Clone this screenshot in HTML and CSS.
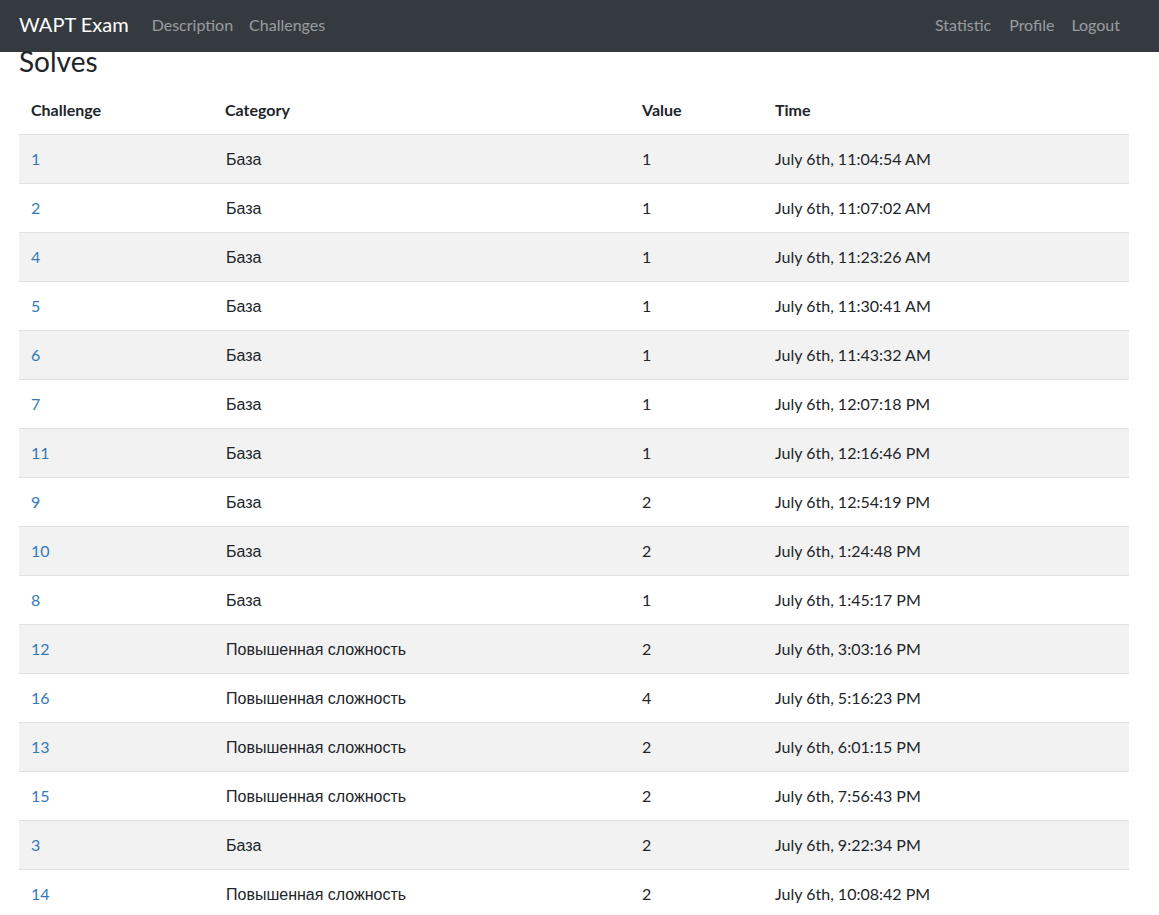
FILE: index.html
```html
<!DOCTYPE html>
<html lang="en">
<head>
<meta charset="utf-8">
<title>WAPT Exam - Solves</title>
<link rel="stylesheet" href="styles.css">
</head>
<body>
<nav class="navbar">
  <div class="nav-left">
    <a class="brand" href="#">WAPT Exam</a>
    <a class="nav-link" href="#">Description</a>
    <a class="nav-link" href="#">Challenges</a>
  </div>
  <div class="nav-right">
    <a class="nav-link stat" href="#">Statistic</a>
    <a class="nav-link prof" href="#">Profile</a>
    <a class="nav-link" href="#">Logout</a>
  </div>
</nav>
<main class="container">
  <h1 class="title">Solves</h1>
  <table class="solves">
    <colgroup>
      <col class="c-chal">
      <col class="c-cat">
      <col class="c-val">
      <col class="c-time">
    </colgroup>
    <thead>
      <tr><th>Challenge</th><th>Category</th><th>Value</th><th>Time</th></tr>
    </thead>
    <tbody>
      <tr><td><a href="#">1</a></td><td class="cat"><span>База</span></td><td>1</td><td>July 6th, 11:04:54 AM</td></tr>
      <tr><td><a href="#">2</a></td><td class="cat"><span>База</span></td><td>1</td><td>July 6th, 11:07:02 AM</td></tr>
      <tr><td><a href="#">4</a></td><td class="cat"><span>База</span></td><td>1</td><td>July 6th, 11:23:26 AM</td></tr>
      <tr><td><a href="#">5</a></td><td class="cat"><span>База</span></td><td>1</td><td>July 6th, 11:30:41 AM</td></tr>
      <tr><td><a href="#">6</a></td><td class="cat"><span>База</span></td><td>1</td><td>July 6th, 11:43:32 AM</td></tr>
      <tr><td><a href="#">7</a></td><td class="cat"><span>База</span></td><td>1</td><td>July 6th, 12:07:18 PM</td></tr>
      <tr><td><a href="#">11</a></td><td class="cat"><span>База</span></td><td>1</td><td>July 6th, 12:16:46 PM</td></tr>
      <tr><td><a href="#">9</a></td><td class="cat"><span>База</span></td><td>2</td><td>July 6th, 12:54:19 PM</td></tr>
      <tr><td><a href="#">10</a></td><td class="cat"><span>База</span></td><td>2</td><td>July 6th, 1:24:48 PM</td></tr>
      <tr><td><a href="#">8</a></td><td class="cat"><span>База</span></td><td>1</td><td>July 6th, 1:45:17 PM</td></tr>
      <tr><td><a href="#">12</a></td><td class="cat"><span>Повышенная сложность</span></td><td>2</td><td>July 6th, 3:03:16 PM</td></tr>
      <tr><td><a href="#">16</a></td><td class="cat"><span>Повышенная сложность</span></td><td>4</td><td>July 6th, 5:16:23 PM</td></tr>
      <tr><td><a href="#">13</a></td><td class="cat"><span>Повышенная сложность</span></td><td>2</td><td>July 6th, 6:01:15 PM</td></tr>
      <tr><td><a href="#">15</a></td><td class="cat"><span>Повышенная сложность</span></td><td>2</td><td>July 6th, 7:56:43 PM</td></tr>
      <tr><td><a href="#">3</a></td><td class="cat"><span>База</span></td><td>2</td><td>July 6th, 9:22:34 PM</td></tr>
      <tr><td><a href="#">14</a></td><td class="cat"><span>Повышенная сложность</span></td><td>2</td><td>July 6th, 10:08:42 PM</td></tr>
    </tbody>
  </table>
</main>
</body>
</html>
```

FILE: styles.css
```css
* { box-sizing: border-box; }
html, body {
  margin: 0;
  padding: 0;
  background: #fff;
  font-family: Lato, "Liberation Sans", Arial, sans-serif;
  color: #212529;
  font-size: 16px;
}
a { text-decoration: none; }

.navbar {
  height: 52px;
  background: #343a40;
  display: flex;
  align-items: center;
  justify-content: space-between;
  padding: 0 31px 4px 19px;
}
.nav-left, .nav-right {
  display: flex;
  align-items: center;
}
.brand {
  color: #fff;
  font-size: 20px;
  margin-right: 15px;
}
.nav-link {
  color: rgba(255, 255, 255, 0.5);
  font-size: 16px;
  padding: 0 8px;
}
.nav-link.stat { margin-right: 2px; }
.nav-link.prof { margin-right: 1px; }

.container {
  padding: 0 30px 0 19px;
}
.title {
  font-size: 28px;
  font-weight: 400;
  line-height: 28px;
  margin: -5px 0 11px 0;
}

.solves {
  width: 100%;
  border-collapse: collapse;
}
.c-chal { width: 194px; }
.c-cat { width: 417px; }
.c-val { width: 133px; }
.c-time { width: 366px; }

.solves th {
  text-align: left;
  font-weight: 700;
  padding: 12px;
  line-height: 24px;
}
.solves td {
  padding: 12px;
  line-height: 24px;
  border-top: 1px solid #dee2e6;
}
.solves td.cat { padding-left: 13px; }
.solves td.cat span {
  font-family: "Liberation Sans", Arial, sans-serif;
  line-height: 1;
}
.solves tbody tr:nth-child(odd) { background: #f2f2f2; }
.solves td a { color: #337ab7; }
```
